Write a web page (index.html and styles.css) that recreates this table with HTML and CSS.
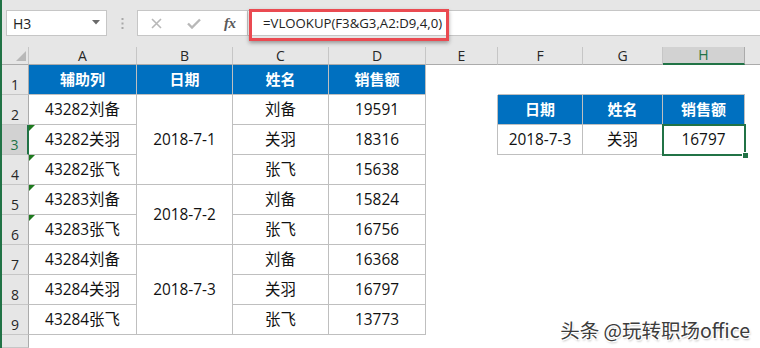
FILE: index.html
```html
<!DOCTYPE html>
<html lang="zh">
<head>
<meta charset="utf-8">
<title>VLOOKUP</title>
<link rel="stylesheet" href="styles.css">
</head>
<body>
<div class="app">
  <div class="toolbar">
    <div class="namebox">
      <span class="nb-text">H3</span>
      <svg class="caret" width="8" height="5" viewBox="0 0 8 5"><path d="M0 0H8L4 4.5Z" fill="#6a6a6a"/></svg>
    </div>
    <svg class="dots" width="3" height="11" viewBox="0 0 3 11"><rect x="0.5" y="0" width="2" height="2" fill="#a8a8a8"/><rect x="0.5" y="4.5" width="2" height="2" fill="#a8a8a8"/><rect x="0.5" y="9" width="2" height="2" fill="#a8a8a8"/></svg>
    <div class="fxbox">
      <svg class="ico-x" width="11" height="11" viewBox="0 0 11 11"><path d="M1 1L10 10M10 1L1 10" stroke="#b8b8b8" stroke-width="1.6" fill="none"/></svg>
      <svg class="ico-ok" width="14" height="11" viewBox="0 0 14 11"><path d="M1 5.5L5 9.5L13 1.5" stroke="#b8b8b8" stroke-width="2.4" fill="none"/></svg>
      <span class="fx">fx</span>
    </div>
    <div class="formula"><span class="ftext">=VLOOKUP(F3&amp;G3,A2:D9,4,0)</span></div>
    <div class="callout"></div>
  </div>

  <div class="sheet">
    <!-- column headers -->
    <div class="corner"><span class="corner-tri"></span></div>
    <div class="ch">A</div><div class="ch">B</div><div class="ch">C</div><div class="ch">D</div>
    <div class="ch">E</div><div class="ch">F</div><div class="ch">G</div><div class="ch sel">H</div><div class="ch last"></div>

    <!-- row 1 -->
    <div class="rh">1</div>
    <div class="c hd">辅助列</div><div class="c hd">日期</div><div class="c hd">姓名</div><div class="c hd">销售额</div>
    <div class="e"></div><div class="e bb"></div><div class="e bb"></div><div class="e bb"></div><div class="e"></div>

    <!-- row 2 -->
    <div class="rh">2</div>
    <div class="c">43282刘备</div><div class="c m3">2018-7-1</div><div class="c">刘备</div><div class="c">19591</div>
    <div class="e br"></div><div class="c hd">日期</div><div class="c hd">姓名</div><div class="c hd">销售额</div><div class="e"></div>

    <!-- row 3 -->
    <div class="rh sel">3</div>
    <div class="c tri">43282关羽</div><div class="c">关羽</div><div class="c">18316</div>
    <div class="e br"></div><div class="c">2018-7-3</div><div class="c">关羽</div><div class="c active">16797</div><div class="e"></div>

    <!-- row 4 -->
    <div class="rh">4</div>
    <div class="c tri">43282张飞</div><div class="c">张飞</div><div class="c">15638</div>
    <div class="e"></div><div class="e"></div><div class="e"></div><div class="e"></div><div class="e"></div>

    <!-- row 5 -->
    <div class="rh">5</div>
    <div class="c tri">43283刘备</div><div class="c m2">2018-7-2</div><div class="c">刘备</div><div class="c">15824</div>
    <div class="e"></div><div class="e"></div><div class="e"></div><div class="e"></div><div class="e"></div>

    <!-- row 6 -->
    <div class="rh">6</div>
    <div class="c tri">43283张飞</div><div class="c">张飞</div><div class="c">16756</div>
    <div class="e"></div><div class="e"></div><div class="e"></div><div class="e"></div><div class="e"></div>

    <!-- row 7 -->
    <div class="rh">7</div>
    <div class="c">43284刘备</div><div class="c m3">2018-7-3</div><div class="c">刘备</div><div class="c">16368</div>
    <div class="e"></div><div class="e"></div><div class="e"></div><div class="e"></div><div class="e"></div>

    <!-- row 8 -->
    <div class="rh">8</div>
    <div class="c">43284关羽</div><div class="c">关羽</div><div class="c">16797</div>
    <div class="e"></div><div class="e"></div><div class="e"></div><div class="e"></div><div class="e"></div>

    <!-- row 9 -->
    <div class="rh">9</div>
    <div class="c">43284张飞</div><div class="c">张飞</div><div class="c">13773</div>
    <div class="e"></div><div class="e"></div><div class="e"></div><div class="e"></div><div class="e"></div>

    <!-- row 10 (partial) -->
    <div class="rh"></div>
  </div>

  <div class="watermark">头条 @玩转职场office</div>
</div>
</body>
</html>
```

FILE: styles.css
```css
html, body {
  margin: 0;
  padding: 0;
  background: #fff;
}

.app {
  position: relative;
  width: 760px;
  height: 348px;
  box-sizing: border-box;
  border-left: 2px solid #217346;
  background: #fff;
  overflow: hidden;
  font-family: "Open Sans", "Noto Sans CJK SC", sans-serif;
  color: #000;
}

/* ---------- formula bar ---------- */
.toolbar {
  position: relative;
  height: 47px;
  box-sizing: border-box;
  background: #e6e6e6;
  display: flex;
  align-items: flex-start;
  padding: 10px 0 0 4px;
}

.namebox {
  width: 101px;
  height: 26px;
  box-sizing: border-box;
  background: #fff;
  border: 1px solid #c6c6c6;
  display: flex;
  align-items: center;
  justify-content: space-between;
  padding: 0 6px 0 6px;
}

.nb-text {
  font-family: "Open Sans", sans-serif;
  font-size: 14px;
  color: #222;
}

.caret {
  display: block;
  margin-top: -2px;
}

.dots {
  display: block;
  margin: 8px 13px 0 14px;
}

.fxbox {
  width: 111px;
  height: 26px;
  box-sizing: border-box;
  background: #fff;
  border: 1px solid #c6c6c6;
  display: flex;
  align-items: center;
  padding-left: 13px;
}

.ico-x {
  display: block;
}

.ico-ok {
  display: block;
  margin-left: 25px;
}

.fx {
  margin-left: 23px;
  font-family: "Liberation Serif", serif;
  font-style: italic;
  font-size: 15px;
  font-weight: bold;
  color: #5a5a5a;
  letter-spacing: -0.5px;
}

.formula {
  flex: 1;
  height: 26px;
  box-sizing: border-box;
  margin-left: -1px;
  background: #fff;
  border: 1px solid #c6c6c6;
  border-right: none;
  display: flex;
  align-items: center;
  padding-left: 15px;
}

.ftext {
  font-family: "Open Sans", sans-serif;
  font-size: 13.2px;
  color: #222;
  white-space: nowrap;
}

.callout {
  position: absolute;
  left: 247px;
  top: 9px;
  width: 200px;
  height: 32px;
  box-sizing: border-box;
  border: 3px solid #ea4a51;
  box-shadow: 0 2px 4px rgba(0, 0, 0, 0.35);
}

/* ---------- sheet ---------- */
.sheet {
  display: grid;
  grid-template-columns: 27px 108px 96px 96px 97px 72px 85px 80px 82px 1fr;
  grid-template-rows: 18px repeat(9, 30px) 1fr;
  height: 301px;
}

.corner {
  position: relative;
  background: #e6e6e6;
  border-right: 1px solid #c6c6c6;
  border-bottom: 1px solid #ababab;
}

.corner-tri {
  position: absolute;
  right: 2px;
  bottom: 3px;
  width: 0;
  height: 0;
  border-left: 10px solid transparent;
  border-bottom: 10px solid #b8b8b8;
}

.ch {
  background: #e6e6e6;
  border-right: 1px solid #c6c6c6;
  border-bottom: 1px solid #ababab;
  display: flex;
  align-items: center;
  justify-content: center;
  font-size: 14px;
  line-height: 1;
  color: #262626;
}

.ch.last {
  border-right: none;
}

.ch.sel {
  background: #d2d2d2;
  color: #217346;
  border-bottom: 2px solid #217346;
  border-right-color: #ababab;
}

.rh {
  background: #e6e6e6;
  border-right: 1px solid #ababab;
  border-bottom: 1px solid #c6c6c6;
  display: flex;
  align-items: flex-end;
  justify-content: center;
  font-size: 14px;
  line-height: 1;
  padding-bottom: 2px;
  box-sizing: border-box;
  color: #262626;
}

.rh.sel {
  background: #d2d2d2;
  color: #217346;
  border-right: 2px solid #217346;
}

.c {
  position: relative;
  box-sizing: border-box;
  border-right: 1px solid #bfbfbf;
  border-bottom: 1px solid #bfbfbf;
  background: #fff;
  display: flex;
  align-items: center;
  justify-content: center;
  font-size: 15.4px;
  line-height: 1;
  white-space: nowrap;
  color: #111;
}

.c.hd {
  background: #0070c0;
  color: #fff;
  font-weight: bold;
  font-size: 15px;
}

.m3 {
  grid-row: span 3;
}

.m2 {
  grid-row: span 2;
}

.tri::before {
  content: "";
  position: absolute;
  left: 0;
  top: 0;
  width: 0;
  height: 0;
  border-top: 6px solid #1f7a1f;
  border-right: 6px solid transparent;
}

.bb {
  border-bottom: 1px solid #bfbfbf;
}

.br {
  border-right: 1px solid #bfbfbf;
}

.active::after {
  content: "";
  position: absolute;
  left: -1px;
  top: -1px;
  right: -2px;
  bottom: -2px;
  border: 2px solid #217346;
}

.active::before {
  content: "";
  position: absolute;
  right: -4px;
  bottom: -4px;
  width: 5px;
  height: 5px;
  background: #217346;
  border-left: 1px solid #fff;
  border-top: 1px solid #fff;
  z-index: 2;
}

/* ---------- watermark ---------- */
.watermark {
  position: absolute;
  right: 10px;
  bottom: 9px;
  font-family: "Noto Sans CJK SC", sans-serif;
  font-size: 19.5px;
  line-height: 1;
  color: #3c3c3c;
  text-shadow: 1px 1px 0 #fff, -1px -1px 0 #fff, 1px -1px 0 #fff, -1px 1px 0 #fff, 1px 2px 2px rgba(0,0,0,0.25);
  white-space: nowrap;
}
```
